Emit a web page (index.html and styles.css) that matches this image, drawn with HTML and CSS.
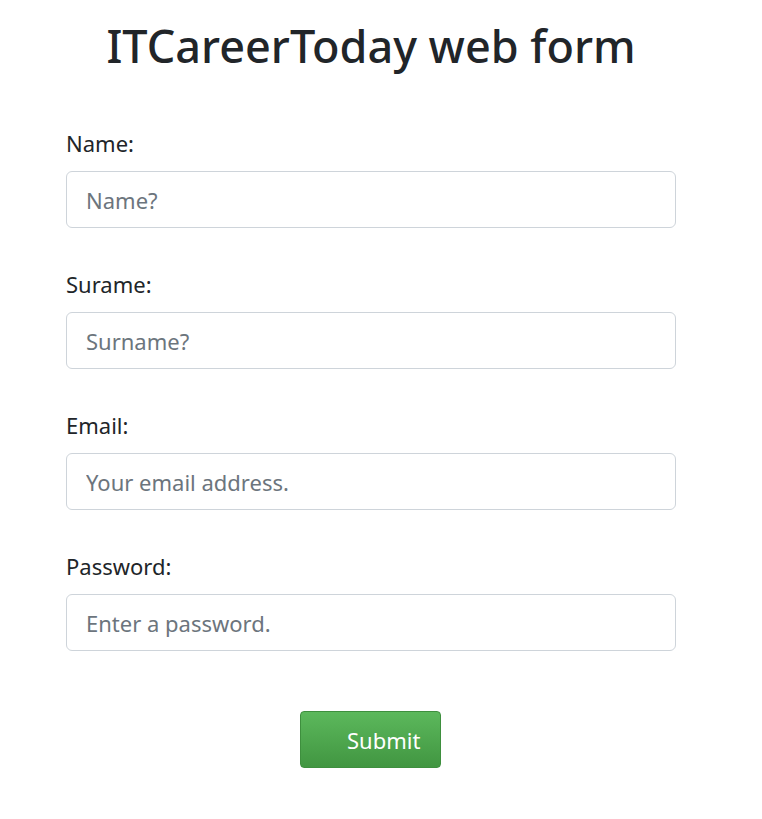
FILE: index.html
```html
<!DOCTYPE html>
<html lang="en">
<head>
<meta charset="utf-8">
<title>ITCareerToday web form</title>
<link rel="stylesheet" href="styles.css">
</head>
<body>
<main class="page">
  <h1 class="title">ITCareerToday web form</h1>
  <form class="form">
    <div class="field">
      <label class="label" for="name">Name:</label>
      <input class="input" id="name" type="text" placeholder="Name?">
    </div>
    <div class="field">
      <label class="label" for="surname">Surame:</label>
      <input class="input" id="surname" type="text" placeholder="Surname?">
    </div>
    <div class="field">
      <label class="label" for="email">Email:</label>
      <input class="input" id="email" type="email" placeholder="Your email address.">
    </div>
    <div class="field">
      <label class="label" for="password">Password:</label>
      <input class="input" id="password" type="password" placeholder="Enter a password.">
    </div>
    <div class="actions">
      <button class="btn" type="button">Submit</button>
    </div>
  </form>
</main>
</body>
</html>
```
FILE: styles.css
```css
* { box-sizing: border-box; }
html, body { margin: 0; padding: 0; background: #fff; }
body {
  font-family: "Segoe UI", "Noto Sans", "Open Sans", sans-serif;
  color: #212529;
}
.page {
  width: 610px;
  margin-left: 66px;
  padding-top: 16px;
}
.title {
  margin: 0;
  text-align: center;
  font-size: 45px;
  font-weight: 500;
  line-height: 60px;
}
.form {
  margin-top: 53px;
}
.field {
  display: flex;
  flex-direction: column;
  margin-bottom: 42px;
}
.label {
  font-size: 22px;
  line-height: 28px;
  margin-bottom: 14px;
}
.input {
  height: 57px;
  width: 100%;
  border: 1px solid #ced4da;
  border-radius: 6px;
  padding: 0 19px;
  font-family: inherit;
  font-size: 22px;
  color: #495057;
  background: #fff;
}
.input::placeholder { color: #6c757d; opacity: 1; }
.actions {
  display: flex;
  justify-content: center;
  margin-top: 60px;
}
.btn {
  width: 141px;
  height: 57px;
  margin-left: -1px;
  border: 1px solid #3e8f3e;
  border-radius: 4px;
  background: linear-gradient(to bottom, #5cb85c, #419641);
  color: #fff;
  font-family: inherit;
  font-size: 22px;
  padding: 0 16px 0 46px;
  text-align: left;
}
```
